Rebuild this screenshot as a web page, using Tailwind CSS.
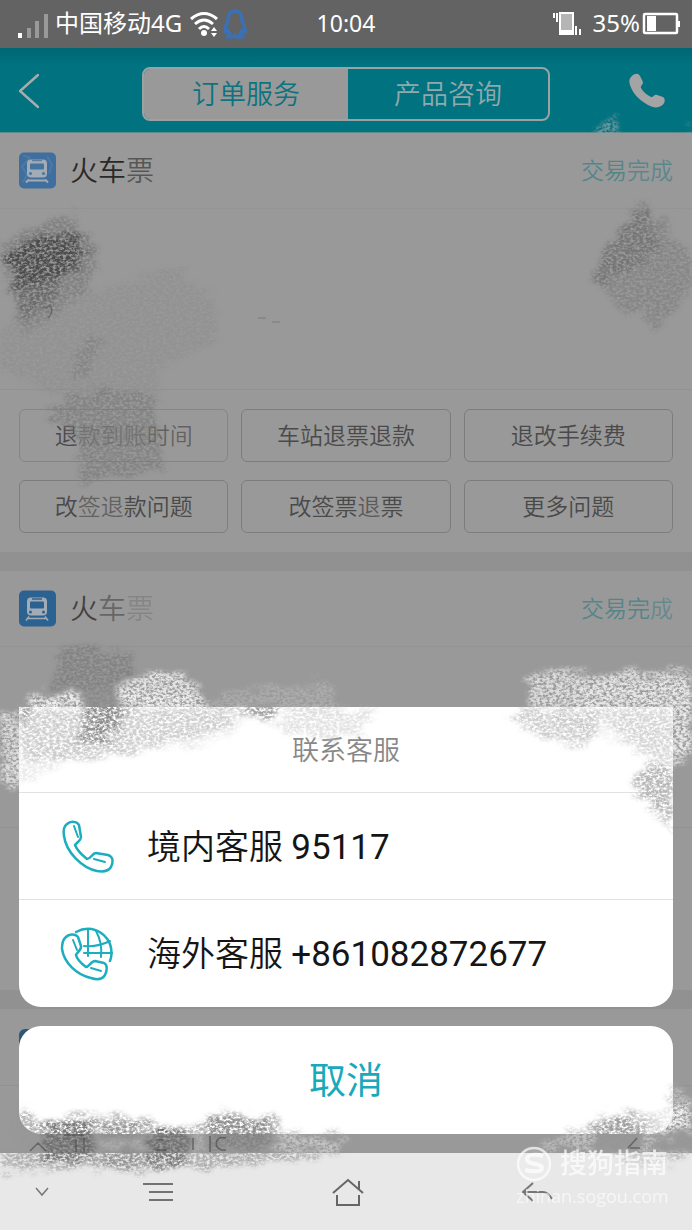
<!DOCTYPE html>
<html lang="zh-CN">
<head>
<meta charset="utf-8">
<meta name="viewport" content="width=device-width, initial-scale=1">
<title>订单服务</title>
<script src="https://cdn.jsdelivr.net/npm/@tailwindcss/browser@4"></script>
</head>
<body class="bg-[#999999]">
<div class="relative flex min-h-screen flex-col overflow-hidden font-['Roboto','Noto_Sans_CJK_SC',sans-serif] font-[350] text-[#4a4a4a]">

  <!-- status bar -->
  <div class="grid h-12 grid-cols-[1fr_auto_1fr] items-center bg-[#636363] px-3 font-['Noto_Sans','Noto_Sans_CJK_SC',sans-serif] text-2xl font-normal text-white">
    <div class="flex items-center pl-1.5">
      <svg class="mt-1 h-7 w-[37px] shrink-0" viewBox="0 0 37 28"><path d="M0 21h4v5H0z" fill="#fff"/><path d="M9 16h4v10H9zM17 9h4v17h-4zM26 2h4v24h-4z" fill="#999"/></svg>
      <span class="pb-0.5 whitespace-nowrap">中国移动4G</span>
      <svg class="ml-2 h-7 w-8 shrink-0" viewBox="0 0 32 28" fill="none" stroke="#fff" stroke-width="3"><path d="M1 9Q14-2 27 9M5 14q9-8 18 0M9 19q5-5 10 0"/><circle cx="14" cy="23" r="3" fill="#fff" stroke="none"/><path d="M21 21l3-4 3 4zM21 23h6l-3 4z" fill="#fff" stroke="none"/></svg>
      <svg class="h-8 w-7 shrink-0" viewBox="0 0 28 32" fill="none" stroke="#3b70b5" stroke-width="3.5" stroke-linejoin="round"><path d="M13 3C7 3 6 8 6 13c-2 4-4 8-3 11l3-2c0 2 1 3 2 4l-3 3h6l2-2 2 2h6l-3-3c1-1 2-2 2-4l3 2c1-3-1-7-3-11 0-5-1-10-7-10z"/></svg>
    </div>
    <time class="pb-0.5 text-[23px]">10:04</time>
    <div class="flex items-center justify-end">
      <svg class="mr-3 h-7 w-7" viewBox="0 0 28 28"><path d="M0 3h2v5H0zM3 3h2v9H3zM22 16h2v9h-2zM26 19h2v6h-2z" fill="#fff"/><path d="M7 3h13v21H7z" fill="#b5b5b5" stroke="#fff" stroke-width="2"/><path d="M7 20h13v4H7z" fill="#fff"/></svg>
      <span class="pb-0.5">35%</span>
      <svg class="ml-0.5 h-6 w-[38px]" viewBox="0 0 38 24"><rect x="2" y="2" width="33" height="19" rx="1" fill="none" stroke="#fff" stroke-width="2.500"/><path d="M5 4h9v15H5zM36 9h2v6h-2z" fill="#fff"/></svg>
    </div>
  </div>

  <!-- title bar -->
  <header class="flex h-[85px] items-center justify-between border-b border-[#5f898e] bg-linear-to-b from-[#006672] via-[#007280] via-20% to-[#007280] px-[19px] pt-1.5 pb-1">
    <button type="button" aria-label="返回" class="w-[104px]"><svg class="h-9 w-5" viewBox="0 0 20 36" fill="none" stroke="#a6acac" stroke-width="2.500" stroke-linecap="round"><path d="M19 2L1 18l18 16"/></svg></button>
    <div class="mt-1.5 grid h-[54px] w-[408px] grid-cols-[204fr_200fr] overflow-hidden rounded-lg border-2 border-[#99a3a4] text-[27px]">
      <button type="button" class="bg-[#999999] pt-0.5 text-[#0b7480]">订单服务</button>
      <button type="button" class="pt-0.5 text-[#8fa9ac]">产品咨询</button>
    </div>
    <button type="button" aria-label="联系客服" class="flex w-[104px] justify-end pr-2"><svg class="h-9 w-9" viewBox="0 0 36 36" fill="#a4a4a4"><path d="M2 4C4 1 9-1 11 3l3 6c0 3-3 4-2 6 2 4 6 7 10 9 2 1 3-3 6-2l6 2c3 2 2 7-2 9-3 2-8 2-13-1C10 27 4 21 1 12 0 9 0 6 2 4z"/></svg></button>
  </header>

  <!-- order list -->
  <main class="flex-1">
    <section>
      <div class="flex h-[76px] items-center border-b border-[#949494] px-[19px]">
        <svg class="h-[37px] w-[37px]" viewBox="0 0 37 36"><rect width="37" height="36" rx="5" fill="#3f6f9e"/><path d="M4 3l7 2-8 9 5 8-4 8M28 4l5 8-3 9" stroke="#4d79a3" stroke-width="2" fill="none"/><rect x="8" y="7" width="20" height="18" rx="4" fill="#a3acb4"/><rect x="11" y="11" width="14" height="6" rx="1" fill="#44759f"/><path d="M13 8h10" stroke="#607f9b" stroke-width="1.500"/><circle cx="11.500" cy="21" r="1.500" fill="#44759f"/><circle cx="24.500" cy="21" r="1.500" fill="#44759f"/><path d="M10 27l-3 3M26 27l3 3M10 28h16" stroke="#a3acb4" stroke-width="2"/></svg>
        <h2 class="ml-3.5 flex-1 pt-0.5 text-[28px] text-[#292929]">火车<span class="text-[#292929]/60">票</span></h2>
        <span class="pt-1 text-[23px] text-[#408085]/80">交易<span class="text-[#408085]/70">完成</span></span>
      </div>
      <div class="h-[181px] border-b border-[#929292]"></div>
      <div class="grid grid-cols-3 gap-x-[13px] gap-y-[18px] p-[19px] text-[23px]">
        <button type="button" class="h-[53px] rounded-md border border-[#858585] pt-1">退<span class="text-[#4a4a4a]/50">款到账</span><span class="text-[#4a4a4a]/70">时间</span></button>
        <button type="button" class="h-[53px] rounded-md border border-[#7d7d7d] pt-1">车站退票退款</button>
        <button type="button" class="h-[53px] rounded-md border border-[#7d7d7d] pt-1">退改手续费</button>
        <button type="button" class="h-[53px] rounded-md border border-[#7d7d7d] pt-1">改<span class="text-[#4a4a4a]/70">签退</span>款问题</button>
        <button type="button" class="h-[53px] rounded-md border border-[#7d7d7d] pt-1">改签票<span class="text-[#4a4a4a]/80">退</span>票</button>
        <button type="button" class="h-[53px] rounded-md border border-[#7d7d7d] pt-1">更多问题</button>
      </div>
    </section>
    <div class="h-[19px] bg-[#919191]"></div>
    <section class="h-[419px]">
      <div class="flex h-[76px] items-center border-b border-[#939393] px-[19px]">
        <svg class="h-[37px] w-[37px]" viewBox="0 0 37 36"><rect width="37" height="36" rx="5" fill="#2c6292"/><rect x="8" y="7" width="20" height="18" rx="4" fill="#a3acb4"/><rect x="11" y="11" width="14" height="7" rx="1" fill="#2c6292"/><path d="M13 8.500h10" stroke="#2c6292" stroke-width="1.500"/><circle cx="11.500" cy="21.500" r="1.500" fill="#2c6292"/><circle cx="24.500" cy="21.500" r="1.500" fill="#2c6292"/><path d="M10 26l-3 4M26 26l3 4M9 28h18" stroke="#a3acb4" stroke-width="1.500"/></svg>
        <h2 class="ml-3.5 flex-1 pt-0.5 text-[28px]"><span class="text-[#333333]/85">火</span><span class="text-[#333333]/50">车</span><span class="text-[#333333]/20">票</span></h2>
        <span class="pt-1 text-[23px] text-[#408085]/80">交易完<span class="text-[#408085]/60">成</span></span>
      </div>
      <div class="h-[181px] border-b border-[#929292]"></div>
    </section>
    <div class="h-[19px] bg-[#919191]"></div>
    <section class="h-[144px]">
      <div class="flex h-[77px] items-center border-b border-[#929292] px-[19px]"><div class="h-9 w-9 rounded-md bg-[#2c5878]"></div></div>
    </section>
  </main>

  <!-- contact sheet -->
  <div role="dialog" aria-labelledby="sheet-title" class="absolute inset-x-[19px] bottom-24 flex flex-col gap-[19px]">
    <div class="overflow-hidden rounded-b-[22px] bg-white text-[34px] text-[#151515]">
      <h3 id="sheet-title" class="flex h-[86px] items-center justify-center border-b border-[#e2e2e2] pt-1 text-[27px] text-[#888888]">联系客服</h3>
      <a href="tel:95117" class="flex h-[107px] items-center border-b border-[#e2e2e2] pt-1 pl-[41px]">
        <svg class="mr-[27px] h-[60px] w-[60px]" viewBox="0 0 60 60" fill="none" stroke="#1caebf" stroke-width="2.500" stroke-linecap="round" stroke-linejoin="round"><path d="M7 6C10 3 17 3 19 7l2 12c0 4-4 5-6 8 2 5 7 10 12 14 4 0 5-6 9-6l12 2c6 2 5 8 3 12-3 5-8 5-14 4C22 50 6 34 4 18 3 12 4 8 7 6z"/><path d="M14 8l4 11M34 41l11 3" stroke-width="2"/></svg>
        <span>境内客服 <span class="text-[35px] font-normal">95117</span></span>
      </a>
      <a href="tel:+861082872677" class="flex h-[107px] items-center pt-1 pl-[41px]">
        <svg class="mr-[27px] h-[60px] w-[60px]" viewBox="0 0 60 60" fill="none" stroke="#1caebf" stroke-width="2.500" stroke-linecap="round" stroke-linejoin="round"><path d="M5 12c3-4 10-5 13-1l3 9c1 4-4 6-5 9 1 5 6 9 10 12 3 0 5-6 9-6l9 2c4 2 3 8 1 12-3 5-8 5-14 3C17 49 4 37 2 23c0-5 1-9 3-11z"/><path d="M16 6c13-7 28-2 34 12 2 6 2 12 0 17"/><path d="M28 4v26M36 5c5 9 6 17 5 26M24 20c9 1 18-1 26-5M24 27h28M13 14l4 10M31 42l10 3" stroke-width="2"/></svg>
        <span>海外客服 <span class="text-[35px] font-normal">+861082872677</span></span>
      </a>
    </div>
    <button type="button" class="h-[108px] rounded-[22px] bg-white pt-1 text-[37px] font-normal text-[#18a9ba]">取消</button>
  </div>

  <!-- bottom navigation -->
  <nav class="grid h-[77px] grid-cols-[63fr_190fr_190fr_190fr_59fr] items-center bg-[#e8e8e8]">
    <button type="button" aria-label="收起" class="flex justify-end pr-3.5"><svg class="h-2.5 w-3.5" viewBox="0 0 14 10" fill="none" stroke="#777" stroke-width="1.500"><path d="M1 1l6 7 6-7"/></svg></button>
    <button type="button" aria-label="菜单" class="flex justify-center"><svg class="h-5 w-8" viewBox="0 0 32 20" stroke="#727272" stroke-width="2"><path d="M1 2h30M7 10h24M7 18h24"/></svg></button>
    <button type="button" aria-label="主页" class="flex justify-center"><svg class="h-7 w-8" viewBox="0 0 32 28" fill="none" stroke="#666" stroke-width="2"><path d="M1 15L16 2l15 13M27 3v8M5 17v10h22V17"/></svg></button>
    <button type="button" aria-label="后退" class="flex justify-center"><svg class="h-5 w-8" viewBox="0 0 32 20" fill="none" stroke="#777" stroke-width="2"><path d="M11 1L1 10l10 9M1 10h20q5 0 9 7"/></svg></button>
  </nav>

  <!-- chalk scribbles that hide the order details -->
  <svg class="pointer-events-none absolute inset-0 h-full w-full" viewBox="0 0 692 1230" preserveAspectRatio="none" aria-hidden="true">
    <defs>
      <filter id="chalk" filterUnits="userSpaceOnUse" x="0" y="0" width="692" height="1230" color-interpolation-filters="sRGB">
        <feTurbulence type="fractalNoise" baseFrequency="0.05 0.18" numOctaves="4" seed="4" result="edge"/>
        <feDisplacementMap in="SourceGraphic" in2="edge" scale="26" xChannelSelector="R" yChannelSelector="G" result="rough"/>
        <feGaussianBlur in="rough" stdDeviation="2" result="soft"/>
        <feTurbulence type="fractalNoise" baseFrequency="0.3 0.42" numOctaves="3" seed="8"/>
        <feColorMatrix values="0 0 0 0 0  0 0 0 0 0  0 0 0 0 0  3 0 0 0 -0.850" result="grain"/>
        <feComposite in="soft" in2="grain" operator="in"/>
      </filter>
    </defs>
    <g filter="url(#chalk)">
      <!-- dark patch, left -->
      <path d="M0 248L12 236 74 212 80 235 98 249 92 285 60 315 22 334 14 310 12 282 2 272z" fill="#6a6a6a" opacity=".5"/>
      <path d="M6 254L30 238 78 233 82 262 55 282 22 288 8 270z" fill="#404040" opacity=".8"/>
      <path d="M14 286L66 272 54 296 24 324z" fill="#555" opacity=".5"/>
      <path d="M0 330L60 300 176 266 212 300 218 338 158 372 160 400 60 396 0 372z" fill="#8a8a8a" opacity=".45"/>
      <path d="M76 350L92 336 102 345 76 384z" fill="#777" opacity=".5"/>
      <path d="M48 410L88 390 150 392 158 425 164 468 80 484 78 440z" fill="#777" opacity=".6"/>
      <!-- grey patch, right -->
      <path d="M588 276L640 204 650 202 654 218 666 218 672 242 692 246 692 290 656 330 640 312 616 310 604 288z" fill="#747474" opacity=".5"/>
      <path d="M590 274L642 204 650 204 660 250 600 286z" fill="#666" opacity=".5"/>
      <path d="M594 138L604 120 620 116 614 138zM680 138l12-16v16z" fill="#8ea0a2" opacity=".8"/>
      <!-- grey above the sheet -->
      <path d="M60 646L130 652 138 700 120 738 80 740 50 690z" fill="#747474" opacity=".6"/>
      <path d="M86 686h40v55H86z" fill="#8a8a8a"/>
      <!-- white sweep, left -->
      <path d="M0 714L30 710 34 694 82 690 96 735 92 758 40 772 20 784 0 784z" fill="#e8e8e8" opacity=".85"/>
      <path d="M30 700L80 696 92 748 20 758 22 730z" fill="#f5f5f5" opacity=".8"/>
      <path d="M112 686L132 680 140 672 178 670 200 690 218 724 220 742 92 758 122 714z" fill="#ececec" opacity=".9"/>
      <path d="M128 692L196 700 214 738 120 748z" fill="#f6f6f6" opacity=".7"/>
      <path d="M206 700L252 690 332 680 338 712 214 714z" fill="#c4c4c4" opacity=".45"/>
      <path d="M216 718L246 704 252 716 225 738z" fill="#eee"/>
      <!-- grey inside the sheet, left -->
      <path d="M20 708L95 708 204 706 245 712 212 735 110 755 40 762 20 748z" fill="#999" opacity=".4"/>
      <path d="M20 706L34 706 24 722 20 724z" fill="#999" opacity=".9"/>
      <path d="M86 702L122 702 122 722 98 744 78 744z" fill="#8d8d8d" opacity=".9"/>
      <path d="M272 726L300 708 376 708 358 736 312 740z" fill="#c8c8c8" opacity=".5"/>
      <path d="M232 704L280 704 262 720z" fill="#999" opacity=".9"/>
      <!-- white sweep, right -->
      <path d="M526 678L550 670 606 674 692 670 692 762 664 764 616 742 530 706z" fill="#eee" opacity=".8"/>
      <path d="M580 684L690 680 690 754 640 748 580 712z" fill="#eee" opacity=".6"/>
      <path d="M504 718L530 708 600 712 590 746 550 740z" fill="#a8a8a8" opacity=".55"/>
      <path d="M596 708L672 708 672 762 640 752z" fill="#aaa" opacity=".35"/>
      <path d="M628 780L656 762 672 770 672 830z" fill="#999" opacity=".7"/>
      <!-- scribbles along the bottom, left -->
      <path d="M0 1156L22 1152 14 1126 24 1104 34 1122 80 1116 152 1118 160 1130 206 1124 212 1112 278 1118 284 1136 345 1134 344 1154 270 1162 206 1168 100 1168 60 1168 0 1172z" fill="#969696" opacity=".7"/>
      <path d="M46 1122L90 1116 94 1160 44 1162z" fill="#5a5a5a" opacity=".65"/>
      <path d="M102 1124L138 1120 142 1172 104 1168z" fill="#888" opacity=".65"/>
      <path d="M150 1128L186 1130 188 1164 144 1172z" fill="#606060" opacity=".65"/>
      <path d="M208 1114L264 1118 276 1148 212 1152z" fill="#777" opacity=".6"/>
      <path d="M264 1142L294 1134 346 1138 338 1152 280 1152z" fill="#d0d0d0" opacity=".8"/>
      <path d="M192 1134h14v18h-14zM100 1140h44v10h-44z" fill="#ccc" opacity=".5"/>
      <!-- scribbles along the bottom, right -->
      <path d="M538 1146L592 1124 600 1114 664 1112 676 1086 692 1100 692 1156 638 1168 610 1154z" fill="#c8c8c8" opacity=".8"/>
      <path d="M594 1122L630 1116 646 1130 640 1154 594 1150z" fill="#6e6e6e" opacity=".5"/>
      <path d="M658 1124L692 1130 692 1154 650 1152z" fill="#666" opacity=".45"/>
      <path d="M654 1118L690 1100 692 1124 664 1140z" fill="#eee"/>
    </g>
    <g stroke="#444" fill="none" stroke-width="1.500" opacity=".6">
      <path d="M30 1151l8-8 8 8M64 1135h20M76 1139v13M84 1138v14M158 1130h6M156 1140h8M155 1150h12M193 1138v12M210 1136v16M226 1138c-12-4-14 14 0 12M628 1148l9-10M630 1148h10"/>
      <path d="M33 275l6-14M46 308c6-6 8 4 2 10" stroke="#555"/>
      <path d="M258 318h8M272 322h8" stroke="#777"/>
    </g>
  </svg>

  <!-- watermark -->
  <div class="absolute right-6 bottom-5 w-[152px] font-normal text-white/60">
    <div class="flex items-center justify-between">
      <svg class="h-9 w-9" viewBox="0 0 36 36" fill="none" stroke="#fff" stroke-opacity=".7"><circle cx="18" cy="18" r="16" stroke-width="2.500" fill="#fff" fill-opacity=".15"/><path d="M27 10c-6-2-16-2-16 3 0 6 15 4 15 9 0 4-9 4-17 2" stroke-width="4"/></svg>
      <span class="text-[27px] leading-9 font-medium text-white/70">搜狗指南</span>
    </div>
    <div class="text-center font-['Open_Sans','Noto_Sans',sans-serif] text-lg leading-7 whitespace-nowrap">zhinan.sogou.com</div>
  </div>
</div>
</body>
</html>
